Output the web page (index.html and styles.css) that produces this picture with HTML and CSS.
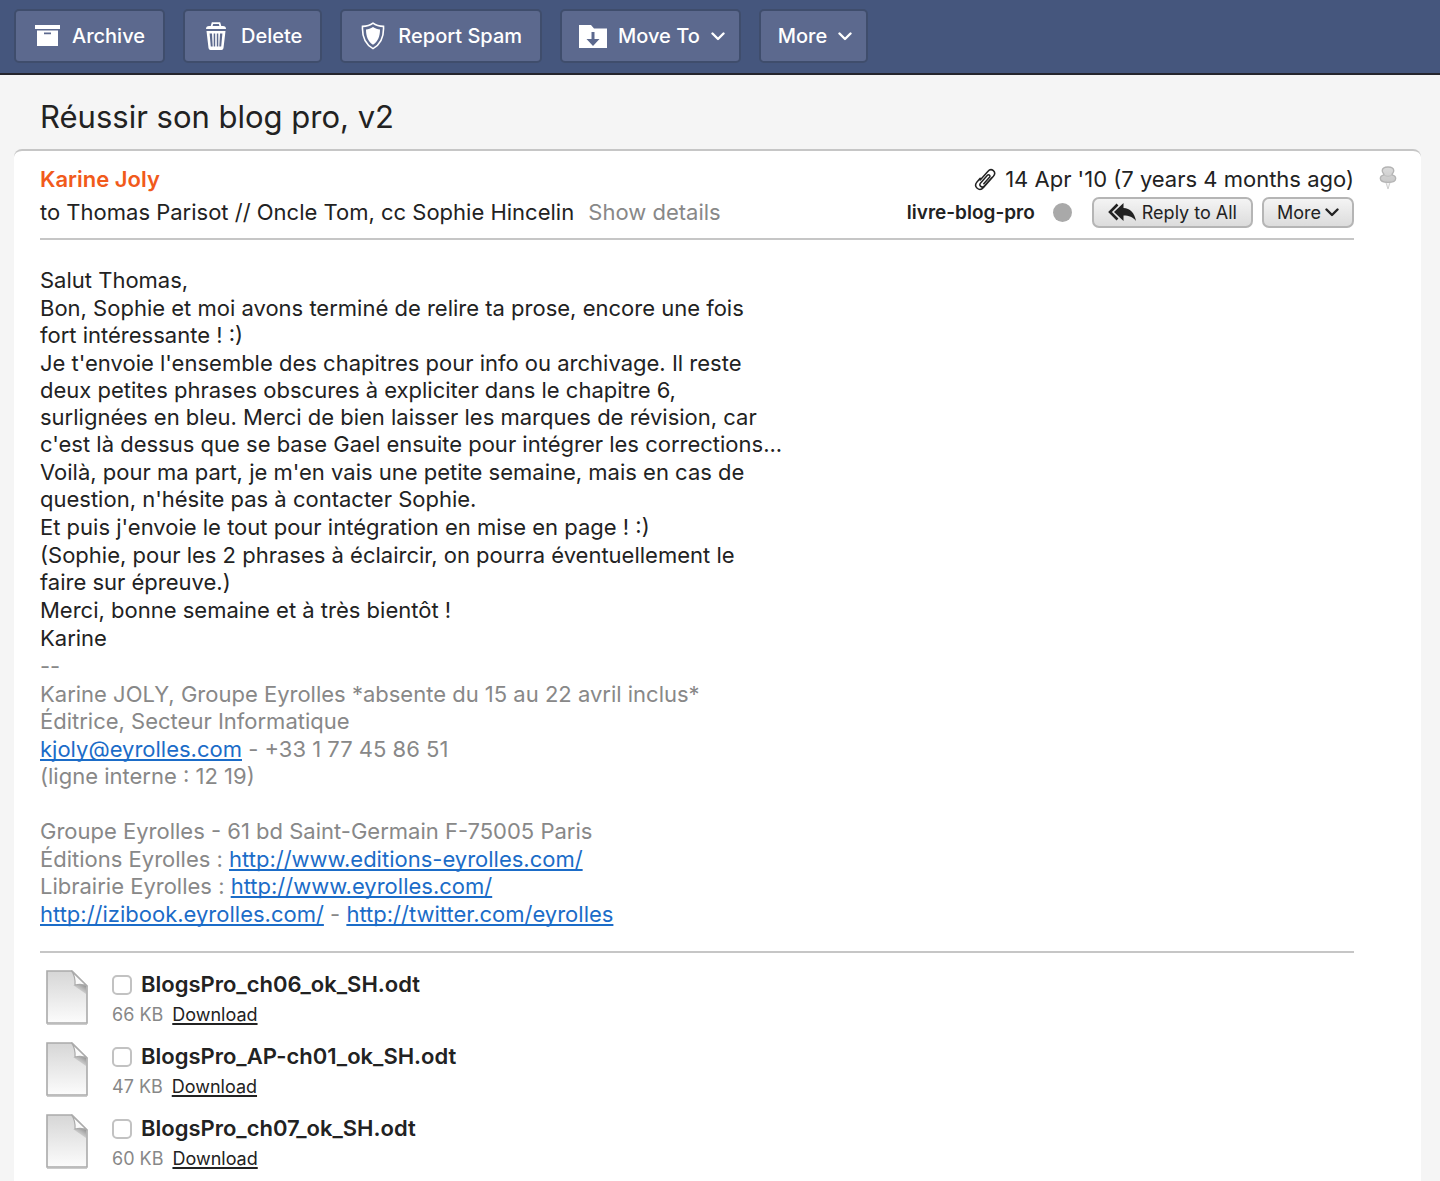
FILE: index.html
```html
<!DOCTYPE html>
<html lang="en">
<head>
<meta charset="utf-8">
<meta name="viewport" content="width=device-width, initial-scale=1">
<title>Réussir son blog pro, v2</title>
<link rel="stylesheet" href="styles.css">
</head>
<body>
<svg class="defs" width="0" height="0" aria-hidden="true">
  <defs>
    <linearGradient id="paper" x1="0" y1="0" x2="0" y2="1"><stop offset="0" stop-color="#d6d6d6"/><stop offset="1" stop-color="#fcfcfc"/></linearGradient>
    <linearGradient id="pin" x1="0" y1="0" x2="0" y2="1"><stop offset="0" stop-color="#dcdcdc"/><stop offset="1" stop-color="#c8c8c8"/></linearGradient>
    <linearGradient id="fold-shade" x1="1" y1="0" x2="0" y2="1"><stop offset="0" stop-color="#8a8a8a"/><stop offset="1" stop-color="#d6d6d6" stop-opacity="0"/></linearGradient>
  </defs>
  <symbol id="chevron" viewBox="0 0 14 9"><path d="M1.5 1.5 7 7l5.500-5.500" fill="none" stroke="currentColor" stroke-width="2.400" stroke-linecap="round" stroke-linejoin="round"/></symbol>
  <symbol id="file" viewBox="0 0 42 55">
    <path d="M1 1h25l15 15v37H1z" fill="url(#paper)" stroke="#aaa" stroke-width="1.600"/>
    <path d="M27 15h13v9z" fill="url(#fold-shade)"/>
    <path d="M25.500 1 41 16c-4-2-8-2-12-1 .5-6-.5-10-3.500-14z" fill="#fafafa" stroke="#aaa" stroke-width="1.200" stroke-linejoin="round"/>
    <path d="M1 54h40" stroke="#bbb" stroke-width="1.500"/>
  </symbol>
</svg>

<header class="toolbar">
  <button type="button" class="tool">
    <span class="tool-icon"><svg class="archive" viewBox="0 0 25 22" aria-hidden="true"><path fill="#fff" d="M0 0h25v4H0z"/><path fill="#fff" fill-rule="evenodd" d="M2 5.500h21V21H2zM9 7.500v1.800h7V7.500z"/></svg></span>
    Archive
  </button>
  <button type="button" class="tool">
    <span class="tool-icon"><svg class="trash" viewBox="0 0 22 28" aria-hidden="true"><path d="M6.500 4.500 7.500 1.200h7L15.500 4.500" fill="none" stroke="#fff" stroke-width="1.800"/><path fill="#fff" d="M1 7q0-3 3-3h14q3 0 3 3z"/><path fill="#fff" fill-rule="evenodd" d="M1.500 9h19l-2 17q-.3 2-2 2h-11q-1.700 0-2-2zM4.600 11.500l1.200 13h1.900L7 11.500zM8.700 11.500v13h1.500v-13zM11.800 11.500v13h1.500v-13zM15 11.500l-.7 13h1.900l1.200-13z"/></svg></span>
    Delete
  </button>
  <button type="button" class="tool">
    <span class="tool-icon"><svg class="shield" viewBox="0 0 24 28" aria-hidden="true"><path d="M12 1.200C9 3.500 5.500 4.400 1.500 4.400 1 14 3.500 22 12 26.600 20.500 22 23 14 22.500 4.400 18.500 4.400 15 3.500 12 1.200z" fill="none" stroke="#fff" stroke-width="1.600"/><path d="M12 5C9.500 6.600 7.500 7.200 5 7.400c0 6.600 2 12 7 15.400 5-3.400 7-8.800 7-15.400-2.500-.2-4.500-.8-7-2.400z" fill="#fff"/></svg></span>
    Report Spam
  </button>
  <button type="button" class="tool dropdown">
    <span class="tool-icon"><svg class="folder" viewBox="0 0 28 23" aria-hidden="true"><path fill="#fff" fill-rule="evenodd" d="M0 0h12l3 3.500h13V23H0zM12.500 7v7H7.500l6.500 7 6.500-7h-5V7z"/></svg></span>
    Move To
    <svg class="chevron" aria-hidden="true"><use href="#chevron"/></svg>
  </button>
  <button type="button" class="tool dropdown">
    More
    <svg class="chevron" aria-hidden="true"><use href="#chevron"/></svg>
  </button>
</header>

<main class="thread">
  <h1 class="subject">Réussir son blog pro, v2</h1>

  <article class="message">
    <div class="content">
      <header class="message-head">
        <div class="head-row">
          <span class="sender">Karine Joly</span>
          <div class="date">
            <svg class="clip" viewBox="0 0 22 24" aria-hidden="true"><path d="M18.200 9.200 10.400 18c-2.400 2.600-6-.4-3.800-3.100L13.200 7.400c1.500-1.600 3.700.2 2.300 1.900L9.800 15.800M6.200 10.200 3 13.900c-4 4.900 2.300 10.200 6.500 5.600L19.400 8.200c3.600-4.300-1.900-8.900-5.600-4.800L6.200 12" fill="none" stroke="#222" stroke-width="1.500" stroke-linecap="round"/></svg>
            <time datetime="2010-04-14">14 Apr '10 (7 years 4 months ago)</time>
          </div>
        </div>
        <div class="head-row">
          <div class="recipients">to Thomas Parisot // Oncle Tom, cc Sophie Hincelin <a class="details" href="#details">Show details</a></div>
          <div class="controls">
            <span class="label">livre-blog-pro</span>
            <span class="dot"></span>
            <button type="button" class="small-button reply">
              <svg class="reply-icon" viewBox="0 0 28 19" aria-hidden="true"><path d="M9.500 1.500 2 9l7.500 7.500" fill="none" stroke="#222" stroke-width="2.600"/><path fill="#222" d="M15.500 0v5C22 5.500 26.500 9.500 28 18c-3-4-7-5.500-12.500-5.500V18L6 9z"/></svg>
              Reply to All
            </button>
            <button type="button" class="small-button">More<svg class="chevron" aria-hidden="true"><use href="#chevron"/></svg></button>
          </div>
        </div>
      </header>

      <div class="body">
        <p>Salut Thomas,</p>
        <p>Bon, Sophie et moi avons terminé de relire ta prose, encore une fois<br>fort intéressante ! :)</p>
        <p>Je t'envoie l'ensemble des chapitres pour info ou archivage. Il reste<br>deux petites phrases obscures à expliciter dans le chapitre 6,<br>surlignées en bleu. Merci de bien laisser les marques de révision, car<br>c'est là dessus que se base Gael ensuite pour intégrer les corrections...</p>
        <p>Voilà, pour ma part, je m'en vais une petite semaine, mais en cas de<br>question, n'hésite pas à contacter Sophie.</p>
        <p>Et puis j'envoie le tout pour intégration en mise en page ! :)</p>
        <p>(Sophie, pour les 2 phrases à éclaircir, on pourra éventuellement le<br>faire sur épreuve.)</p>
        <p>Merci, bonne semaine et à très bientôt !</p>
        <p>Karine</p>
        <div class="signature">
          <p>--</p>
          <p>Karine JOLY, Groupe Eyrolles *absente du 15 au 22 avril inclus*<br>Éditrice, Secteur Informatique</p>
          <p><a href="mailto:kjoly@eyrolles.com">kjoly@eyrolles.com</a> - +33 1 77 45 86 51<br>(ligne interne : 12 19)</p>
          <p><br>Groupe Eyrolles - 61 bd Saint-Germain F-75005 Paris</p>
          <p>Éditions Eyrolles : <a href="http://www.editions-eyrolles.com/">http://www.editions-eyrolles.com/</a><br>Librairie Eyrolles : <a href="http://www.eyrolles.com/">http://www.eyrolles.com/</a></p>
          <p><a href="http://izibook.eyrolles.com/">http://izibook.eyrolles.com/</a> - <a href="http://twitter.com/eyrolles">http://twitter.com/eyrolles</a></p>
        </div>
      </div>

      <ul class="attachments">
        <li class="attachment">
          <svg class="file" aria-hidden="true"><use href="#file"/></svg>
          <div class="file-info">
            <label class="file-name"><input type="checkbox" class="check">BlogsPro_ch06_ok_SH.odt</label>
            <div class="file-meta">66 KB <a class="download" href="#ch06">Download</a></div>
          </div>
        </li>
        <li class="attachment">
          <svg class="file" aria-hidden="true"><use href="#file"/></svg>
          <div class="file-info">
            <label class="file-name"><input type="checkbox" class="check">BlogsPro_AP-ch01_ok_SH.odt</label>
            <div class="file-meta">47 KB <a class="download" href="#ch01">Download</a></div>
          </div>
        </li>
        <li class="attachment">
          <svg class="file" aria-hidden="true"><use href="#file"/></svg>
          <div class="file-info">
            <label class="file-name"><input type="checkbox" class="check">BlogsPro_ch07_ok_SH.odt</label>
            <div class="file-meta">60 KB <a class="download" href="#ch07">Download</a></div>
          </div>
        </li>
      </ul>
    </div>
    <button type="button" class="pin" aria-label="Pin message">
      <svg class="pin-icon" viewBox="0 0 18 25" aria-hidden="true"><path d="M6.500 16h5L9 24z" fill="#f4f4f4" stroke="#ccc"/><path d="M9 1c3.800 0 6 1.400 6 4 0 2-1.800 2.800-1.800 4.200C15.500 9.800 17 11 17 13c0 2.700-3.500 4-8 4s-8-1.300-8-4c0-2 1.500-3.200 3.800-3.800C4.800 7.800 3 7 3 5c0-2.600 2.200-4 6-4z" fill="url(#pin)" stroke="#b4b4b4" stroke-width="1.400"/><path d="M5 9.500c2 1.600 6 1.600 8 0" fill="none" stroke="#bcbcbc"/></svg>
    </button>
  </article>
</main>
</body>
</html>
```
FILE: styles.css
```css
* {
  box-sizing: border-box;
}

body {
  margin: 0;
  min-height: 100vh;
  display: flex;
  flex-direction: column;
  background: #f5f5f5;
  color: #222;
  font-family: Inter, "Liberation Sans", sans-serif;
  font-size: 22px;
  line-height: 27px;
}

.defs {
  position: absolute;
}

button {
  font-family: inherit;
  cursor: pointer;
}

svg {
  flex: none;
}

/* Toolbar */
.toolbar {
  display: flex;
  flex-wrap: wrap;
  gap: 18px;
  padding: 9px 14px 10px;
  background: #45567d;
  border-bottom: 2px solid #25252d;
}

.tool {
  display: flex;
  align-items: center;
  height: 54px;
  padding: 0 18px 0 17px;
  border: 2px solid #3f4d6c;
  border-radius: 5px;
  background: #5c698e;
  color: #fff;
  font-size: 20px;
  font-weight: 500;
  line-height: 28px;
  white-space: nowrap;
}

.dropdown {
  padding-right: 14px;
}

.tool-icon {
  display: flex;
  justify-content: center;
  width: 28px;
  margin-right: 11px;
}

.archive {
  width: 25px;
  height: 22px;
}

.trash {
  width: 22px;
  height: 28px;
}

.shield {
  width: 24px;
  height: 28px;
}

.folder {
  width: 28px;
  height: 23px;
}

.chevron {
  width: 14px;
  height: 9px;
}

.tool .chevron {
  margin-left: 11px;
}

/* Thread */
.thread {
  flex: 1;
  display: flex;
  flex-direction: column;
  padding: 0 19px 0 14px;
}

.subject {
  margin: 0;
  padding: 23px 26px 13px;
  font-size: 31px;
  font-weight: 400;
  line-height: 38px;
}

.message {
  flex: 1;
  display: flex;
  align-items: flex-start;
  padding: 15px 24px 0 26px;
  border-top: 2px solid #c6c6c6;
  border-radius: 8px 8px 0 0;
  background: #fff;
}

.content {
  flex: 1;
  min-width: 0;
}

.message-head {
  display: flex;
  flex-direction: column;
  gap: 4px;
  padding-bottom: 10px;
  border-bottom: 2px solid #c6c6c6;
}

.head-row {
  display: flex;
  align-items: center;
  justify-content: space-between;
  gap: 20px;
}

.sender {
  color: #f15a1b;
  font-weight: 600;
}

.date {
  display: flex;
  align-items: center;
  gap: 9px;
}

.clip {
  width: 22px;
  height: 24px;
}

.details {
  margin-left: 8px;
  color: #888;
  text-decoration: none;
}

.controls {
  display: flex;
  align-items: center;
  gap: 9px;
}

.label {
  font-size: 19px;
  font-weight: 600;
}

.dot {
  width: 19px;
  height: 19px;
  margin: 0 11px 0 9px;
  border-radius: 50%;
  background: #a9a9a9;
}

.small-button {
  display: flex;
  align-items: center;
  gap: 4px;
  height: 31px;
  padding: 0 13px;
  border: 2px solid #b5b5b5;
  border-radius: 7px;
  background: linear-gradient(#f4f4f4, #dcdcdc);
  color: #222;
  font-size: 18px;
  line-height: 24px;
  white-space: nowrap;
}

.reply {
  gap: 6px;
  padding: 0 14px;
}

.reply-icon {
  width: 28px;
  height: 19px;
}

.pin {
  width: 18px;
  margin-left: 25px;
  padding: 0;
  border: 0;
  background: none;
}

.pin-icon {
  display: block;
  width: 18px;
  height: 24px;
}

/* Message text */
.body,
.signature {
  display: flex;
  flex-direction: column;
  gap: 1px;
}

.body {
  padding: 27px 0 23px;
}

.body p {
  margin: 0;
}

.signature {
  color: #888;
}

.signature a {
  color: #1b6cc8;
}

.signature a,
.download {
  text-decoration-thickness: 2px;
  text-decoration-skip-ink: none;
  text-underline-offset: 2px;
}

/* Attachments */
.attachments {
  display: flex;
  flex-direction: column;
  gap: 17px;
  margin: 0;
  padding: 17px 6px 11px;
  border-top: 2px solid #c6c6c6;
  list-style: none;
}

.attachment {
  display: flex;
  gap: 24px;
  height: 55px;
}

.file {
  width: 42px;
  height: 55px;
}

.file-info {
  display: flex;
  flex-direction: column;
  gap: 5px;
  padding-top: 1px;
}

.file-name {
  display: flex;
  align-items: center;
  gap: 9px;
  font-weight: 600;
}

.check {
  appearance: none;
  width: 20px;
  height: 20px;
  margin: 0;
  border: 2px solid #c2c2c2;
  border-radius: 5px;
  background: #fff;
}

.check:checked {
  background: #1b6cc8;
}

.file-meta {
  display: flex;
  gap: 9px;
  color: #888;
  font-size: 18px;
  line-height: 24px;
}

.download {
  color: #222;
}
```
